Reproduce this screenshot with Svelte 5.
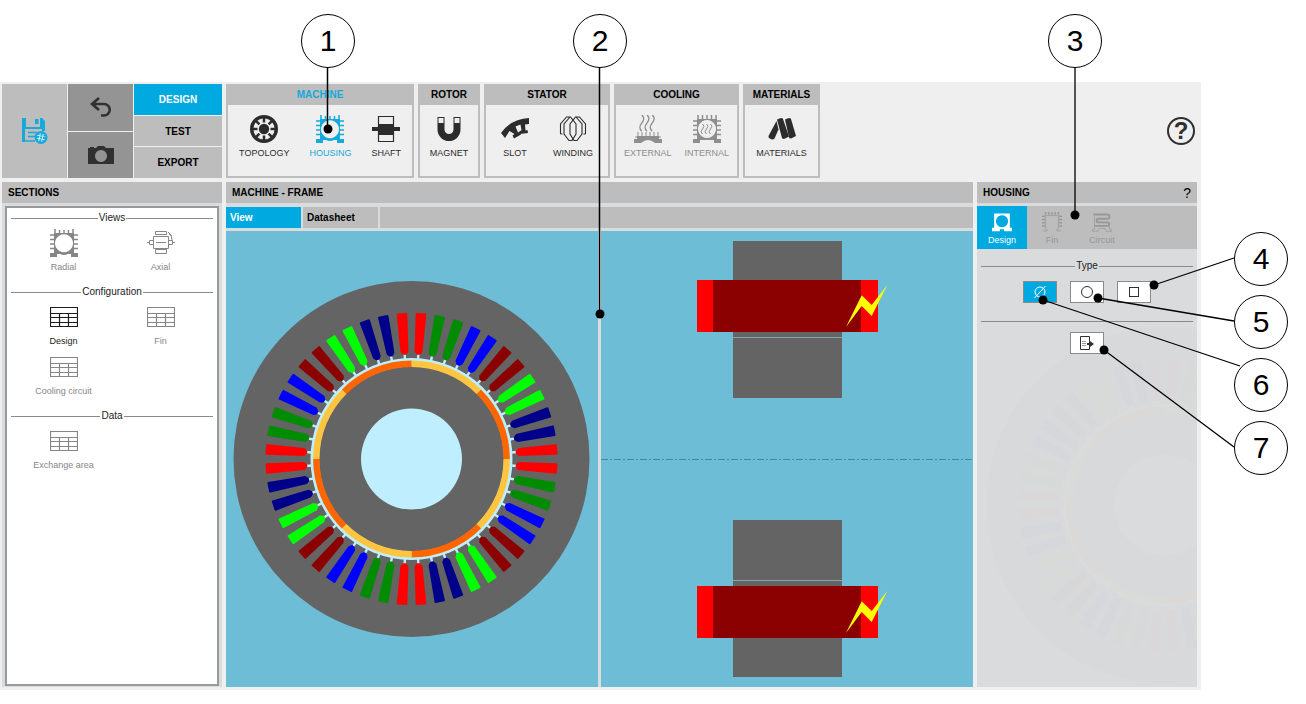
<script lang="ts">
  const groups = [
    {
      title: 'MACHINE',
      width: 188,
      gap: 20,
      active: true,
      items: [
        { icon: 'topology', label: 'TOPOLOGY' },
        { icon: 'housing', label: 'HOUSING', active: true },
        { icon: 'shaft', label: 'SHAFT' }
      ]
    },
    { title: 'ROTOR', width: 62, gap: 0, items: [{ icon: 'magnet', label: 'MAGNET' }] },
    {
      title: 'STATOR',
      width: 126,
      gap: 24,
      items: [
        { icon: 'slot', label: 'SLOT' },
        { icon: 'winding', label: 'WINDING' }
      ]
    },
    {
      title: 'COOLING',
      width: 125,
      gap: 13,
      items: [
        { icon: 'external', label: 'EXTERNAL', disabled: true },
        { icon: 'internal', label: 'INTERNAL', disabled: true }
      ]
    },
    { title: 'MATERIALS', width: 77, gap: 0, items: [{ icon: 'materials', label: 'MATERIALS' }] }
  ];

  const sections = [
    {
      title: 'Views',
      items: [
        { icon: 'housing', label: 'Radial' },
        { icon: 'axial', label: 'Axial' }
      ]
    },
    {
      title: 'Configuration',
      items: [
        { icon: 'table', label: 'Design', active: true },
        { icon: 'table', label: 'Fin' },
        { icon: 'table', label: 'Cooling circuit' }
      ]
    },
    { title: 'Data', items: [{ icon: 'table', label: 'Exchange area' }] }
  ];

  const modes = ['DESIGN', 'TEST', 'EXPORT'];
  let mode = $state('DESIGN');

  const housingTabs = [
    { icon: 'frame', label: 'Design' },
    { icon: 'fins', label: 'Fin' },
    { icon: 'circuit', label: 'Circuit' }
  ];
  let housingTab = $state('Design');

  const types = [
    { id: 'none', label: 'No housing' },
    { id: 'circle', label: 'Circular' },
    { id: 'square', label: 'Square' }
  ];
  let type = $state('none');

  // phase colours, two slots each, repeated every 90 degrees
  const phases = ['#ff0000', '#008c00', '#0000ff', '#8b0000', '#00ff00', '#00008b'];
  const slots = Array.from({ length: 48 }, (_, i) => ({
    angle: i * 7.5 - 3.75,
    color: phases[Math.floor(i / 2) % 6]
  }));
  const poles = Array.from({ length: 8 }, (_, i) => i);

  const topCallouts = [
    { n: 1, x: 328, y: 41, tx: 328, ty: 129 },
    { n: 2, x: 600, y: 41, tx: 600, ty: 314 }
  ];
  const sideCallouts = [
    { n: 3, x: 75, y: 41, lx: 75, ly: 67, tx: 75, ty: 215 },
    { n: 4, x: 261, y: 259, lx: 234, ly: 258, tx: 154, ty: 285 },
    { n: 5, x: 261, y: 322, lx: 234, ly: 321, tx: 98, ty: 298 },
    { n: 6, x: 261, y: 385, lx: 240, ly: 366, tx: 43, ty: 300 },
    { n: 7, x: 261, y: 448, lx: 234, ly: 447, tx: 104, ty: 350 }
  ];
</script>

{#snippet steam()}
  <path d="M-4 -5q3 2 0 5t0 5M0 -5q3 2 0 5t0 5M4 -5q3 2 0 5t0 5" fill="none" stroke="currentColor" />
{/snippet}

{#snippet icon(name: string)}
  <svg class="icon" viewBox="0 0 28 28" fill="currentColor" aria-hidden="true">
    {#if name === 'topology'}
      <circle cx="14" cy="14" r="12.300" fill="none" stroke="currentColor" stroke-width="3.400" />
      <circle cx="14" cy="14" r="5.200" />
      {#each [0, 45, 90, 135, 180, 225, 270, 315] as a}
        <path d="M14 3v4.500" stroke="currentColor" stroke-width="2.500" transform="rotate({a} 14 14)" />
      {/each}
    {:else if name === 'housing'}
      <path
        fill-rule="evenodd"
        d="M4 4h20v20h4v4h-7v-3h-3q-4 2 -8 0H7v3H0v-4h4zM14 5.200a9 9 0 1 0 .01 0z"
      />
      <path
        d="M5 0v4M9.500 1v4M14 1v4M18.500 1v4M23 0v4M0 6h5M0 10.500h5M0 15h5M0 19.500h5M23 6h5M23 10.500h5M23 15h5M23 19.500h5"
        stroke="currentColor"
        stroke-width="1.500"
      />
    {:else if name === 'shaft'}
      <path d="M6.500 1.500h15v25h-15z" fill="#efefef" stroke="currentColor" stroke-width="1.200" />
      <path d="M6 9h16v3h6v4h-6v4H6v-4H0v-4h6z" />
    {:else if name === 'magnet'}
      <path d="M2.500 2v12.500a11.500 11.500 0 0 0 23 0V2h-7v12.500a4.500 4.500 0 0 1 -9 0V2z" />
      <path d="M3.500 3h5v5h-5zM19.500 3h5v5h-5z" fill="#efefef" />
    {:else if name === 'slot'}
      <path
        d="M0 18Q10 4 28 3v6l-4 .5.500 6 2-.5.500 3-8 1-.5-3 2-.5-1-6-5 2 2.500 6 2-1 1 3-7 4-1.500-3 2-1.500L8.500 16 4 23z"
      />
    {:else if name === 'winding'}
      <g fill="none" stroke="currentColor" stroke-width="1.100">
        <path d="M1.500 19V9l6-7h4l5.500 7v10l-4 6.500h-3l-5-6.500V9l6-7" />
        <path d="M26.500 19V9l-6-7h-4L11 9v10l4 6.500h3l5-6.500V9l-6-7" />
        <path d="M1.500 19h2M26.500 19h-2" />
      </g>
    {:else if name === 'external'}
      <g transform="translate(13 8) scale(1.3 1.6)">{@render steam()}</g>
      <path d="M0 24h3v-3h22v3h3v4h-7q-7-6-14 0H0z" />
      <path d="M4 17v5M8 17v5M12 17v5M16 17v5M20 17v5M24 17v5M1 22h4M23 22h4" stroke="currentColor" />
    {:else if name === 'internal'}
      <path fill-rule="evenodd" d="M4 4h20v20h4v4h-7v-3H7v3H0v-4h4zM14 5a9 9 0 1 0 .01 0z" />
      <path
        d="M5 0v4M9.500 0v4M14 0v4M18.500 0v4M23 0v4M0 6h5M0 10.500h5M0 15h5M0 19.500h5M23 6h5M23 10.500h5M23 15h5M23 19.500h5"
        stroke="currentColor"
        stroke-width="1.500"
      />
      <g transform="translate(13.500 14)">{@render steam()}</g>
    {:else if name === 'materials'}
      <path d="M8.500 6L10.500 14.500 6.500 23.500q-1.500 1.500-4 .5t-2-3z" />
      <path d="M9 4.500l4-1.500q1.500 0 2 1l6 17.500-5 2.500q-1.500 0-2-1z" />
      <path d="M17 4.500l4-1.500q1.500 0 2 1l5 17-5 2.500q-1.500 0-2-1z" />
    {:else if name === 'axial'}
      <path
        d="M6.500 7.500h15v12h-15zM8.500 2.500h11v3h-11zM8.500 20.500h11v4h-11zM2.500 11.500h4v4h-4zM21.500 11.500h4v4h-4zM0 13.500h3M25 13.500h3M9 13.500h10M21 3l3 3 1 5M22 5l3 2"
        fill="none"
        stroke="currentColor"
      />
    {:else if name === 'table'}
      <path
        d="M.5 4.500h27v19H.5zM.5 10.500h27M.5 14.500h27M.5 19.500h27M9.500 10v13.500M18.500 10v13.500"
        fill="none"
        stroke="currentColor"
        stroke-width="1.200"
      />
    {:else if name === 'frame'}
      <path
        fill-rule="evenodd"
        d="M3 2h22v20h3v5H17v-3h-6v3H0v-5h3zM14 4.500a8.500 8.500 0 1 0 .01 0z"
      />
    {:else if name === 'fins'}
      <path d="M5 24V5h18v19M1 26.500h6v-3M27 26.500h-6v-3" fill="none" stroke="currentColor" />
      <path
        d="M5 0v4M9.500 0v4M14 0v4M18.500 0v4M23 0v4M0 6h4M0 10.500h4M0 15h4M0 19.500h4M24 6h4M24 10.500h4M24 15h4M24 19.500h4"
        stroke="currentColor"
        stroke-width="2"
      />
    {:else if name === 'circuit'}
      <g fill="none" stroke="currentColor">
        <path
          d="M2 3.500h19.500q3 0 3 3t-3 3H9q-2.500 0-2.500 2.500T9 14.500h12.500q2.500 0 2.500 2.500t-2.500 2.500H4"
          stroke-width="2.600"
        />
        <path d="M3.500 6v18H1v3h7l2-4h8l2 4h7v-3h-2.500v-4" />
      </g>
    {/if}
  </svg>
{/snippet}

{#snippet motor()}
  <g transform="translate(185.500 228)">
    <circle r="178" fill="#646464" />
    {#each slots as slot}
      <g transform="rotate({slot.angle})">
        <path d="M-1.200 -100h2.400v-6h-2.400z" fill="#bfefff" />
        <path
          d="M-1.500 -104.500L-4 -107.500L-5.300 -145Q-5.300 -146 -4.300 -146H4.300Q5.300 -146 5.300 -145L4 -107.500L1.500 -104.500z"
          fill={slot.color}
        />
      </g>
    {/each}
    <circle r="101" fill="#bfefff" />
    <circle r="92.500" fill="#646464" />
    {#each poles as pole}
      <path
        d="M0 -95.200A95.200 95.200 0 0 1 67.320 -67.320"
        fill="none"
        stroke={pole % 2 ? '#ff6600' : '#ffc440'}
        stroke-width="6.400"
        transform="rotate({pole * 45})"
      />
    {/each}
    <circle r="50.500" fill="#bfefff" />
  </g>
{/snippet}

{#snippet coil()}
  <rect x="96" y="49" width="181" height="52" fill="#ff0000" />
  <rect x="112" y="49" width="148" height="52" fill="#8b0000" />
  <path d="M245 96L260.700 64.300L270.700 74L286.300 54L270.700 85L260.700 75z" fill="#ffff00" />
{/snippet}

{#snippet bubble(c: { n: number; x: number; y: number })}
  <circle cx={c.x} cy={c.y} r="26.500" fill="#fff" stroke="#000" />
  <text x={c.x} y={c.y + 10} text-anchor="middle">{c.n}</text>
{/snippet}

<div class="page">
  <main class="app">
    <header class="toolbar">
      <div class="file">
        <button class="save" aria-label="Save">
          <svg viewBox="0 0 26 28" width="26" height="28">
            <path
              fill="#16a9dc"
              fill-rule="evenodd"
              d="M0 1h4v9h14V1h2l3 3v10h-3v-2H3v13H0zM13 2h3.500v5H13z"
            />
            <path d="M6 15.500h9M6 19.500h7M3 24h10" stroke="#16a9dc" stroke-width="1.500" />
            <circle cx="19" cy="20.500" r="6.500" fill="#16a9dc" />
            <path
              d="M17.500 16.500v8M20.500 16.500v8M15 19h8M15 22h8"
              stroke="#d9f1fa"
              transform="rotate(12 19 20.500)"
            />
          </svg>
        </button>
        <button class="dark" aria-label="Undo">
          <svg viewBox="0 0 22 22" width="22" height="22">
            <path
              d="M9 2L2 8l7 6M2.500 8H14a5.500 5.500 0 0 1 0 11.500h-3"
              fill="none"
              stroke="#303030"
              stroke-width="2.600"
            />
          </svg>
        </button>
        <button class="dark" aria-label="Screenshot">
          <svg viewBox="0 0 28 20" width="28" height="20">
            <path
              fill="#303030"
              fill-rule="evenodd"
              d="M1 3h2V2h4v1h2l2-2h6l2 2h8v16H1zM14 5a6 6 0 1 0 .01 0z"
            />
          </svg>
        </button>
        <nav class="modes">
          {#each modes as m}
            <button class:active={mode === m} onclick={() => (mode = m)}>{m}</button>
          {/each}
        </nav>
      </div>

      {#each groups as group}
        <section class="group" style="width: {group.width}px">
          <h2 class:active={group.active}>{group.title}</h2>
          <div class="tools" style="gap: {group.gap}px">
            {#each group.items as item}
              <button class="tool" class:active={item.active} disabled={item.disabled}>
                {@render icon(item.icon)}
                <span>{item.label}</span>
              </button>
            {/each}
          </div>
        </section>
      {/each}

      <button class="help" aria-label="Help">?</button>
    </header>

    <div class="workspace">
      <aside class="panel">
        <h2 class="bar">SECTIONS</h2>
        <div class="sections">
          {#each sections as section}
            <h3 class="divider">{section.title}</h3>
            <div class="entries">
              {#each section.items as item}
                <button class="entry" class:active={item.active}>
                  {@render icon(item.icon)}
                  <span>{item.label}</span>
                </button>
              {/each}
            </div>
          {/each}
        </div>
      </aside>

      <section class="panel view">
        <h2 class="bar">MACHINE - FRAME</h2>
        <nav class="view-tabs">
          <button class="active">View</button>
          <button>Datasheet</button>
          <span></span>
        </nav>
        <div class="canvases">
          <svg viewBox="0 0 372 456" role="img" aria-label="Radial view">
            {@render motor()}
          </svg>
          <svg viewBox="0 0 372 456" role="img" aria-label="Axial view">
            <path d="M132 10h109v157H132zM132 289h109v157H132z" fill="#646464" />
            <path d="M132 106.500h109M132 349.500h109" stroke="#83a5ae" />
            {@render coil()}
            <g transform="translate(0 306)">{@render coil()}</g>
            <path d="M0 228.500h372" stroke="#4688a4" stroke-dasharray="7 2 2 2" />
          </svg>
        </div>
      </section>

      <aside class="panel">
        <h2 class="bar">HOUSING <button aria-label="Housing help">?</button></h2>
        <nav class="housing-tabs">
          {#each housingTabs as tab}
            <button class:active={housingTab === tab.label} onclick={() => (housingTab = tab.label)}>
              {@render icon(tab.icon)}
              <span>{tab.label}</span>
            </button>
          {/each}
        </nav>
        <div class="settings">
          <svg class="ghost" viewBox="0 0 372 456" aria-hidden="true">{@render motor()}</svg>
          <h3 class="divider">Type</h3>
          <div class="choices">
            {#each types as t}
              <button class:active={type === t.id} aria-label={t.label} onclick={() => (type = t.id)}>
                <svg viewBox="0 0 16 16" width="16" height="16" fill="none" stroke="currentColor">
                  {#if t.id === 'none'}
                    <circle cx="8" cy="8" r="5" />
                    <path d="M2.500 14L13.500 2" />
                  {:else if t.id === 'circle'}
                    <circle cx="8" cy="8" r="5.500" />
                  {:else}
                    <rect x="3.500" y="3.500" width="9" height="9" />
                  {/if}
                </svg>
              </button>
            {/each}
          </div>
          <hr />
          <div class="choices">
            <button aria-label="Apply and close">
              <svg viewBox="0 0 16 16" width="16" height="16">
                <path d="M1.500 1.500h9v13h-9z" fill="#fff" stroke="#303030" />
                <path d="M3 6.500h4M3 8.500h4M3 10.500h4" stroke="#999" />
                <path d="M8 8h3V6l4 3-4 3v-2H8z" fill="#303030" />
              </svg>
            </button>
          </div>
        </div>
      </aside>
    </div>
  </main>

  <svg class="callouts" viewBox="0 0 700 500" width="700" height="500">
    {#each topCallouts as c}
      <path d="M{c.x - 0.5} {c.y + 26}V{c.ty}" stroke="#000" stroke-width="1.500" />
      <circle cx={c.tx} cy={c.ty} r="4.500" />
      {@render bubble(c)}
    {/each}
  </svg>
  <svg class="callouts side" viewBox="0 0 306 500" width="306" height="500">
    {#each sideCallouts as c}
      <path d="M{c.lx} {c.ly}L{c.tx} {c.ty}" stroke="#000" stroke-width="1.300" />
      <circle cx={c.tx} cy={c.ty} r="4.500" />
      {@render bubble(c)}
    {/each}
  </svg>
</div>

<style>
  :global(body) {
    background: #fff;
  }
  .page {
    position: relative;
    display: flex;
    box-sizing: border-box;
    min-height: 100vh;
    padding: 82px 105px 14px 0;
    font-family: 'Liberation Sans', Arial, sans-serif;
    font-size: 10px;
    color: #1c1c1c;
  }
  .page * {
    box-sizing: border-box;
  }
  h2,
  h3 {
    margin: 0;
    font-size: 10px;
  }
  button {
    margin: 0;
    padding: 0;
    border: 0;
    background: none;
    font: inherit;
    color: inherit;
    cursor: pointer;
  }
  .icon {
    display: block;
    width: 28px;
    height: 28px;
  }
  .app {
    flex: 1;
    display: flex;
    flex-direction: column;
    gap: 4px;
    padding: 2px 4px 3px 2px;
    background: #efefef;
  }

  /* toolbar */
  .toolbar {
    display: flex;
    gap: 4px;
    height: 94px;
  }
  .file {
    display: grid;
    grid-template-columns: 65px 65px 88px;
    grid-template-rows: 1fr 1fr;
    gap: 1px;
    width: 220px;
  }
  .file svg {
    display: block;
    margin: auto;
  }
  .save {
    grid-row: 1 / 3;
    background: #bdbdbd;
  }
  .dark {
    grid-column: 2;
    background: #949494;
  }
  .modes {
    grid-column: 3;
    grid-row: 1 / 3;
    display: flex;
    flex-direction: column;
    gap: 1px;
  }
  .modes button {
    flex: 1;
    background: #bdbdbd;
    font-weight: bold;
    color: #000;
  }
  .modes button.active {
    background: #00a9e0;
    color: #fff;
  }
  .group {
    border: 2px solid #bdbdbd;
    border-top: 0;
  }
  .group h2 {
    line-height: 21px;
    background: #bdbdbd;
    text-align: center;
    color: #000;
  }
  .group h2.active,
  .tool.active {
    color: #16a9dc;
  }
  .tools {
    display: flex;
    justify-content: center;
    padding-top: 10px;
  }
  .tool {
    display: flex;
    flex: none;
    flex-direction: column;
    align-items: center;
    gap: 4px;
    font-size: 9px;
    line-height: 12px;
    color: #2c2c2c;
  }
  .tool:disabled {
    color: #8e8e8e;
  }
  .help {
    align-self: center;
    width: 28px;
    height: 28px;
    margin: 0 2px 0 auto;
    border: 2px solid #303030;
    border-radius: 50%;
    font-size: 24px;
    font-weight: bold;
    line-height: 24px;
    color: #303030;
  }

  /* panels */
  .workspace {
    flex: 1;
    display: flex;
    gap: 4px;
  }
  .panel {
    display: flex;
    flex-direction: column;
    width: 220px;
    background: #dadbdc;
  }
  .bar {
    display: flex;
    justify-content: space-between;
    height: 21px;
    padding: 0 6px;
    background: #bdbdbd;
    line-height: 22px;
    color: #000;
  }
  .bar button {
    font-size: 14px;
    font-weight: normal;
  }
  .divider {
    display: flex;
    align-items: center;
    gap: 1px;
    line-height: 14px;
    font-weight: normal;
  }
  .divider::before,
  .divider::after {
    content: '';
    flex: 1;
    height: 1px;
    background: #8a8a8a;
  }
  .sections {
    flex: 1;
    margin: 3px 3px 1px;
    padding: 3px 4px;
    border: 2px solid #999;
    background: #fff;
  }
  .entries {
    display: grid;
    grid-template-columns: 97px 97px;
    justify-content: center;
    padding: 4px 0 6px;
  }
  .entry {
    display: flex;
    flex-direction: column;
    align-items: center;
    gap: 4px;
    height: 50px;
    font-size: 9px;
    line-height: 12px;
    color: #868686;
  }
  .entry.active {
    color: #1c1c1c;
  }

  /* machine view */
  .view {
    flex: 1;
    min-width: 0;
  }
  .view-tabs {
    display: flex;
    gap: 2px;
    height: 21px;
    margin: 4px 0 3px;
  }
  .view-tabs button {
    width: 75px;
    padding: 0 4px;
    background: #bdbdbd;
    font-weight: bold;
    text-align: left;
    color: #000;
  }
  .view-tabs button.active {
    background: #00a9e0;
    color: #fff;
  }
  .view-tabs span {
    flex: 1;
    background: #bdbdbd;
  }
  .canvases {
    flex: 1;
    display: flex;
    gap: 3px;
  }
  .canvases svg {
    flex: 1;
    min-width: 0;
    background: #6dbdd7;
  }

  /* housing settings */
  .housing-tabs {
    display: flex;
    height: 43px;
    margin-top: 3px;
    background: #bdbdbd;
  }
  .housing-tabs button {
    display: flex;
    flex-direction: column;
    align-items: center;
    gap: 2px;
    width: 50px;
    padding-top: 6px;
    font-size: 9px;
    line-height: 12px;
    color: #979797;
  }
  .housing-tabs button.active {
    background: #00a9e0;
    color: #fff;
  }
  .housing-tabs .icon {
    width: 20px;
    height: 20px;
  }
  .settings {
    position: relative;
    flex: 1;
    overflow: hidden;
    padding: 10px 4px;
  }
  .ghost {
    position: absolute;
    right: -154px;
    bottom: -46px;
    width: 372px;
    height: 456px;
    opacity: 0.012;
  }
  .choices {
    display: flex;
    justify-content: center;
    gap: 13px;
    margin: 8px 0 18px;
  }
  .choices button {
    width: 34px;
    height: 22px;
    border: 1px solid #8a8a8a;
    background: #fff;
    color: #303030;
  }
  .choices button.active {
    background: #00a9e0;
    color: #fff;
  }
  .choices svg {
    display: block;
    margin: auto;
  }
  hr {
    height: 1px;
    margin: 0 0 10px;
    border: 0;
    background: #8a8a8a;
  }

  .callouts {
    position: absolute;
    top: 0;
    left: 0;
    pointer-events: none;
    font-size: 30px;
  }
  .callouts.side {
    right: 0;
    left: auto;
  }
</style>
